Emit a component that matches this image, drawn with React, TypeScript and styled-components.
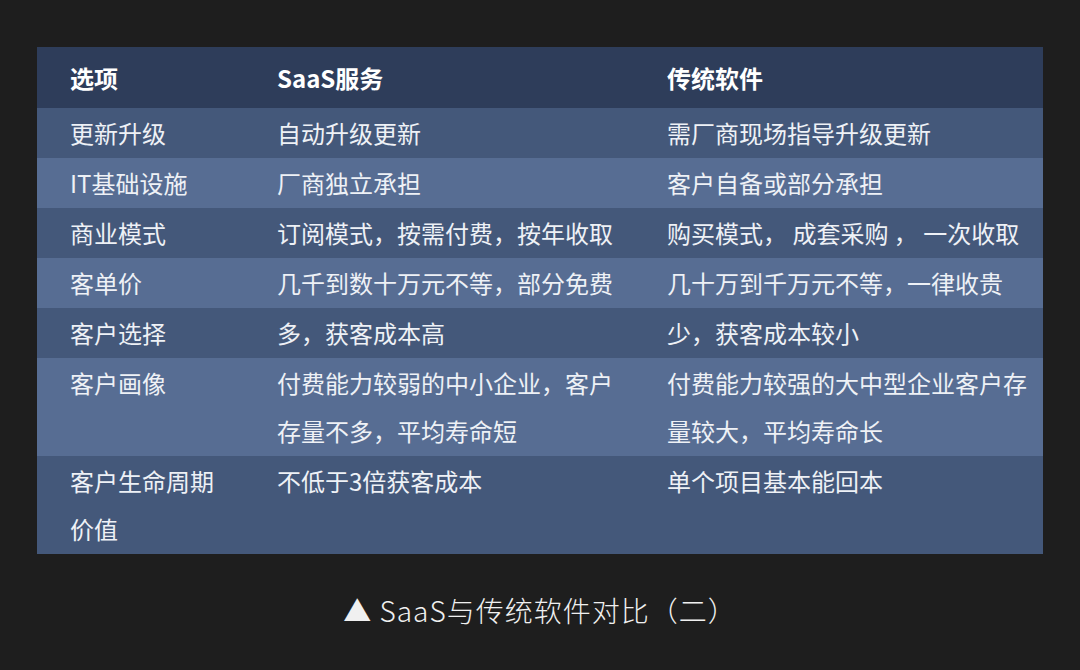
import React from 'react';
import styled, { createGlobalStyle } from 'styled-components';

const GlobalStyle = createGlobalStyle`
  html, body {
    margin: 0;
    padding: 0;
    background: #1e1e1e;
  }
  body {
    font-family: 'Noto Sans CJK SC', 'Noto Sans', sans-serif;
  }
`;

const Page = styled.div`
  width: 1080px;
  height: 670px;
  display: flex;
  flex-direction: column;
  align-items: center;
  padding-top: 47px;
  box-sizing: border-box;
  background: #1e1e1e;
`;

const Table = styled.div`
  width: 1006px;
  display: flex;
  flex-direction: column;
`;

const Row = styled.div<{ $tone: 'head' | 'dark' | 'light' }>`
  display: grid;
  grid-template-columns: 207px 390px 1fr;
  background: ${(p) =>
    p.$tone === 'head' ? '#2e3d5a' : p.$tone === 'dark' ? '#44587a' : '#576d93'};
  padding: ${(p) => (p.$tone === 'head' ? '6px 0 5px' : '1px 0')};
`;

const Cell = styled.div<{ $head?: boolean }>`
  padding-left: 33px;
  padding-right: 12px;
  font-size: 24px;
  line-height: ${(p) => (p.$head ? '50px' : '48px')};
  font-weight: ${(p) => (p.$head ? 700 : 400)};
  color: ${(p) => (p.$head ? '#ffffff' : '#eef1f6')};
  white-space: pre-line;
`;

const Caption = styled.div`
  margin-top: 36px;
  font-size: 28px;
  line-height: 40px;
  color: #f0f0f0;
  font-weight: 300;
  letter-spacing: 1px;
`;

const rows: [string, string, string][] = [
  ['更新升级', '自动升级更新', '需厂商现场指导升级更新'],
  ['IT基础设施', '厂商独立承担', '客户自备或部分承担'],
  ['商业模式', '订阅模式，按需付费，按年收取', '购买模式， 成套采购 ， 一次收取'],
  ['客单价', '几千到数十万元不等，部分免费', '几十万到千万元不等，一律收贵'],
  ['客户选择', '多，获客成本高', '少，获客成本较小'],
  ['客户画像', '付费能力较弱的中小企业，客户\n存量不多，平均寿命短', '付费能力较强的大中型企业客户存\n量较大，平均寿命长'],
  ['客户生命周期\n价值', '不低于3倍获客成本', '单个项目基本能回本'],
];

const App: React.FC = () => {
  return (
    <Page>
      <GlobalStyle />
      <Table>
        <Row $tone="head">
          <Cell $head>选项</Cell>
          <Cell $head>SaaS服务</Cell>
          <Cell $head>传统软件</Cell>
        </Row>
        {rows.map((r, i) => (
          <Row key={i} $tone={i % 2 === 0 ? 'dark' : 'light'}>
            <Cell>{r[0]}</Cell>
            <Cell>{r[1]}</Cell>
            <Cell>{r[2]}</Cell>
          </Row>
        ))}
      </Table>
      <Caption>▲ SaaS与传统软件对比（二）</Caption>
    </Page>
  );
};

export default App;
